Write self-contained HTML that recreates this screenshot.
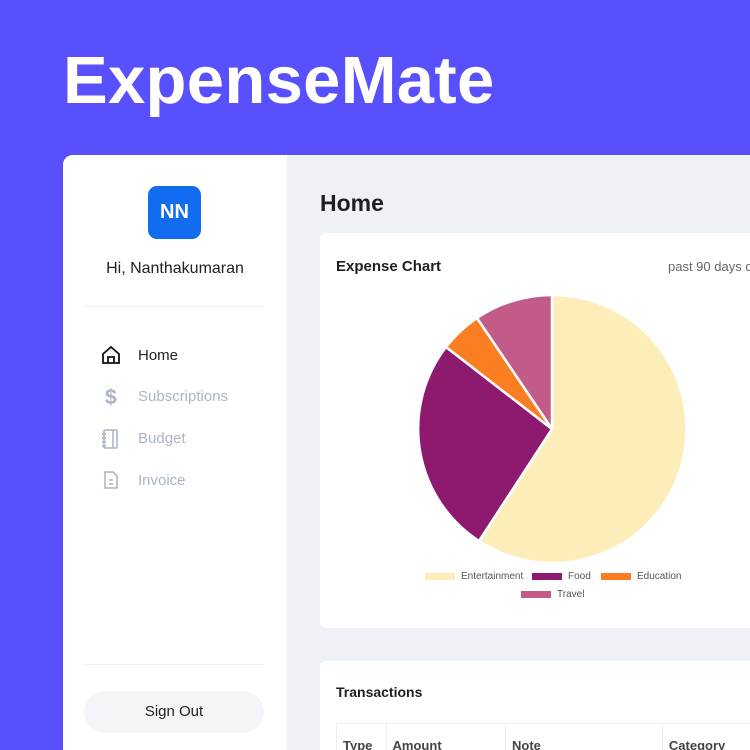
<!DOCTYPE html>
<html><head><style>
*{margin:0;padding:0;box-sizing:border-box}
body{width:750px;height:750px;overflow:hidden;background:#5850fc;font-family:"Liberation Sans",sans-serif;position:relative}
h1{position:absolute;left:63px;top:42px;color:#fff;font-size:67px;font-weight:bold;letter-spacing:0.3px}
.app{position:absolute;left:63px;top:155px;width:687px;height:595px;background:#eef1f6;border-radius:10px 0 0 0;overflow:hidden}
.side{position:absolute;left:0;top:0;width:224px;height:100%;background:#fff}
.av{position:absolute;left:85px;top:31px;width:53px;height:53px;border-radius:9px;background:#126cf0;color:#fff;font-weight:bold;font-size:20px;text-align:center;line-height:53px}
.hi{position:absolute;left:0;width:224px;top:105px;text-align:center;font-size:16px;color:#222}
.hr{position:absolute;left:21px;width:180px;height:1px;background:#eef0f3}
.nav{position:absolute;left:38px;font-size:15px;color:#a9b4c6}
.nav svg{position:absolute;left:0;top:0}
.nav span{position:absolute;left:37px;top:2px;white-space:nowrap}
.so{position:absolute;left:21px;top:536px;width:180px;height:42px;border-radius:21px;background:#f3f5f9;text-align:center;line-height:42px;font-size:15px;color:#222}
.title{position:absolute;left:257px;top:35px;font-size:23px;font-weight:bold;color:#1d1f24}
.card{position:absolute;background:#fff;border-radius:6px}
.ct{position:absolute;font-size:15px;font-weight:bold;color:#1d1f24}
.leg{position:absolute;font-size:10px;color:#555}
.leg i{display:inline-block;width:30px;height:7px;vertical-align:middle;margin-right:6px}
table{position:absolute;left:16px;top:62px;border-collapse:collapse;font-size:13px;font-weight:bold;color:#444}
td{border:1px solid #eceff3;height:40px;padding:3px 6px 0}
</style></head><body>
<h1>ExpenseMate</h1>
<div class="app">
<div class="side">
<div class="av">NN</div>
<div class="hi">Hi, Nanthakumaran</div>
<div class="hr" style="top:151px"></div>
<div class="nav" style="top:190px;color:#222"><svg width="20" height="20" viewBox="0 0 20 20" fill="none" stroke="#111" stroke-width="1.8"><path d="M2 9L10 2l8 7v9H2z"/><path d="M7 18v-6h6v6"/></svg><span>Home</span></div>
<div class="nav" style="top:231px"><svg width="20" height="22" viewBox="0 0 20 22"><text x="4" y="18" font-size="21" font-weight="bold" fill="#a9b4c6" font-family="Liberation Sans">$</text></svg><span>Subscriptions</span></div>
<div class="nav" style="top:273px"><svg width="20" height="22" viewBox="0 0 20 22" fill="none" stroke="#a9b4c6" stroke-width="1.5"><rect x="3" y="2" width="13" height="18" rx="1"/><path d="M12 2v18M1 6h4M1 10h4M1 14h4M1 18h4"/></svg><span>Budget</span></div>
<div class="nav" style="top:315px"><svg width="20" height="20" viewBox="0 0 20 20" fill="none" stroke="#a9b4c6" stroke-width="1.5"><path d="M4 2h8l4 4v12H4z"/><path d="M8 10h4M8 14h4"/></svg><span>Invoice</span></div>
<div class="hr" style="top:509px"></div>
<div class="so">Sign Out</div>
</div>
<div class="title">Home</div>
<div class="card" style="left:257px;top:78px;width:460px;height:395px">
<div class="ct" style="left:16px;top:25px">Expense Chart</div>
<div style="position:absolute;left:348px;top:26px;font-size:13px;color:#666;white-space:nowrap">past 90 days data</div>
<div class="leg" style="left:105px;top:338px"><i style="background:#fdedb8"></i>Entertainment</div>
<div class="leg" style="left:212px;top:338px"><i style="background:#8d1a6e"></i>Food</div>
<div class="leg" style="left:281px;top:338px"><i style="background:#fb7e23"></i>Education</div>
<div class="leg" style="left:201px;top:356px"><i style="background:#c35b89"></i>Travel</div>
</div>
<div class="card" style="left:257px;top:506px;width:460px;height:200px">
<div class="ct" style="left:16px;top:23px;font-size:14px">Transactions</div>
<table><tr><td style="width:50px">Type</td><td style="width:123px">Amount</td><td style="width:164px">Note</td><td style="width:120px">Category</td></tr></table>
</div>
</div>
<svg style="position:absolute;left:0;top:0" width="750" height="750">
<g stroke="#fff" stroke-width="2.5" stroke-linejoin="round">
<path d="M552 429L552 295A134 134 0 1 1 479 541Z" fill="#fdedb8"/>
<path d="M552 429L479 541A134 134 0 0 1 446 347Z" fill="#8d1a6e"/>
<path d="M552 429L446 347A134 134 0 0 1 477 318Z" fill="#fb7e23"/>
<path d="M552 429L477 318A134 134 0 0 1 552 295Z" fill="#c35b89"/>
</g></svg>
</body></html>
